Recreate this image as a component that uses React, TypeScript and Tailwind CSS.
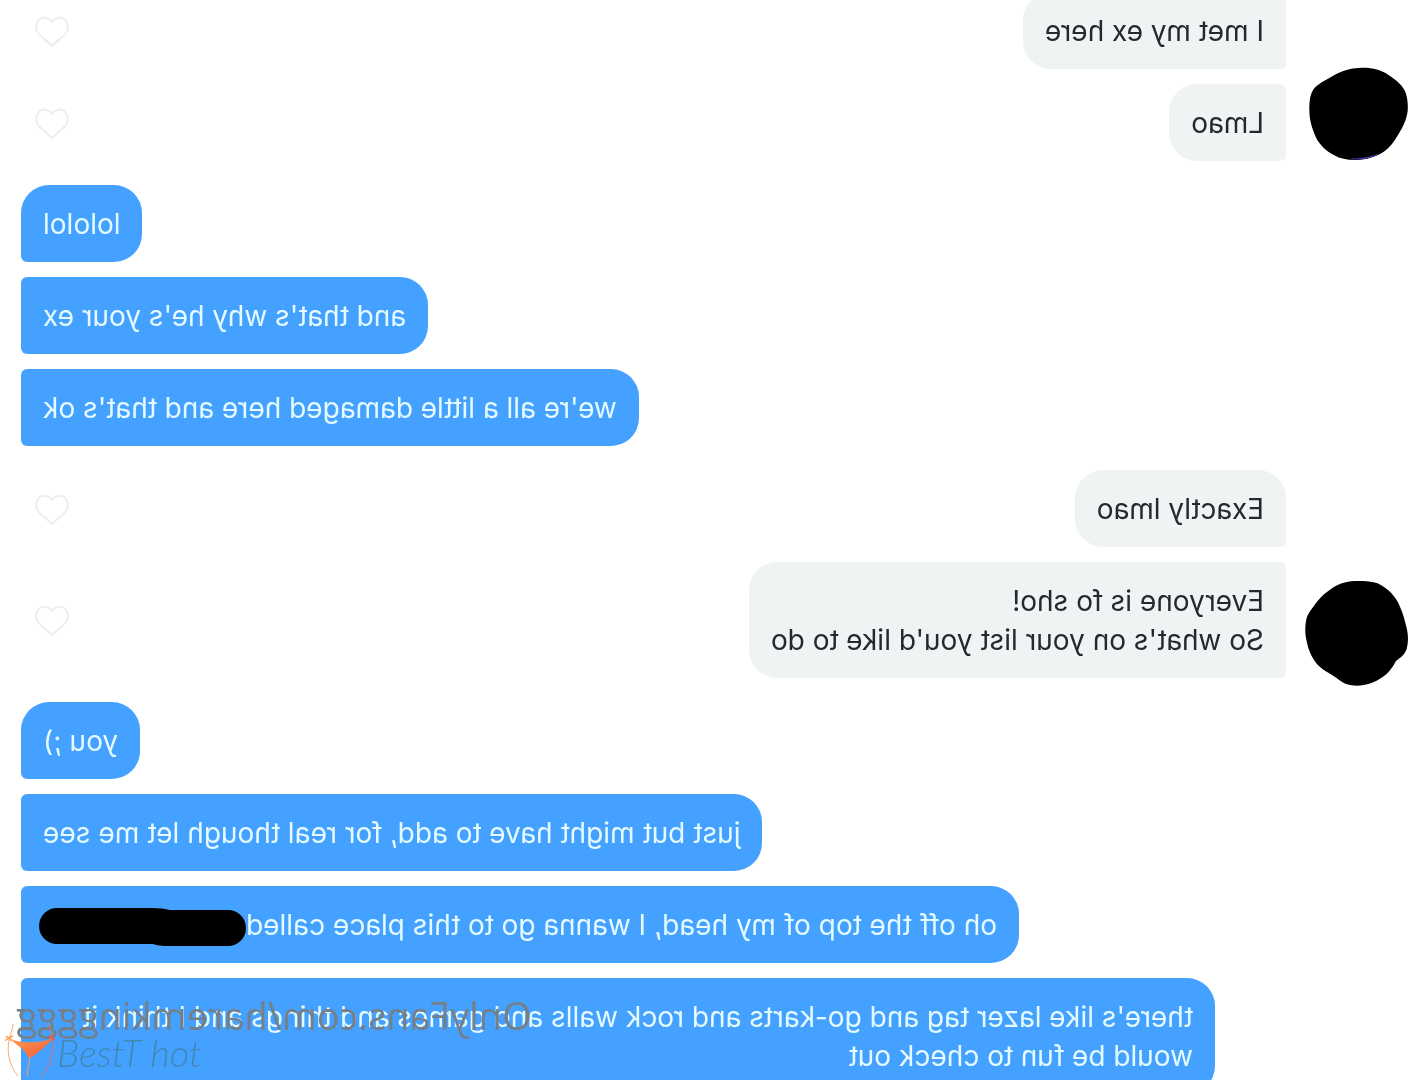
import type { ReactNode } from 'react';
import clsx from 'clsx';

type Message = { id: string; text: ReactNode; corners: string };
type Group = { from: 'them' | 'me'; avatar?: ReactNode; messages: Message[] };

function Redacted() {
  return (
    <svg viewBox="0 0 207 38" className="-mr-1 -my-2 inline-block h-[38px] w-[207px] -scale-x-100 align-middle" role="img" aria-label="redacted">
      <path d="M18 0 H112 Q124 0 131 2 H189 A18 18 0 0 1 189 38 H130 Q120 38 114 36 H18 A18 18 0 0 1 18 0 Z" />
    </svg>
  );
}

function AvatarOne() {
  return (
    <svg viewBox="87 52 298 281" className="h-[94px] w-[99px] -scale-x-100" role="img" aria-label="Profile photo, hidden">
      <path
        d="M250 53 C280 53 305 60 325 74 C350 90 372 108 379 132 C385 152 386 178 382 195 C378 215 368 235 357 252 C343 275 332 294 306 310 C285 322 260 330 232 331 C205 332 182 328 163 317 C140 305 118 285 108 263 C95 235 88 210 88 180 C87 155 90 133 101 117 C112 103 130 95 148 84 C175 66 205 53 250 53 Z"
      />
      <path d="M215 326 C245 327 270 322 300 311 C280 325 250 332 215 329 Z" fill="#4a32a8" />
    </svg>
  );
}

function AvatarTwo() {
  return (
    <svg viewBox="73 65 308 314" className="-mb-2 h-[105px] w-[103px] -scale-x-100" role="img" aria-label="Profile photo, hidden">
      <path
        d="M230 65 C255 65 275 66 290 72 C320 86 345 112 356 140 C368 165 372 190 378 210 C382 230 382 250 377 268 C370 288 355 295 345 304 C335 322 325 338 305 352 C285 367 255 378 228 378 C205 378 190 372 175 361 C155 345 130 335 113 318 C95 300 84 275 79 250 C72 225 72 195 79 172 C84 158 98 143 108 128 C122 110 140 96 158 84 C178 70 205 65 230 65 Z"
      />
    </svg>
  );
}

const groups: Group[] = [
  {
    from: 'them',
    avatar: <AvatarOne />,
    messages: [
      { id: 'met', text: 'I met my ex here', corners: 'rounded-r-[28px] rounded-l-md' },
      { id: 'lmao', text: 'Lmao', corners: 'rounded-r-[28px] rounded-l-md' },
    ],
  },
  {
    from: 'me',
    messages: [
      { id: 'lol', text: 'lololol', corners: 'rounded-[28px] rounded-br-md' },
      { id: 'why', text: "and that's why he's your ex", corners: 'rounded-l-[28px] rounded-r-md' },
      { id: 'ok', text: "we're all a little damaged here and that's ok", corners: 'rounded-l-[28px] rounded-r-md' },
    ],
  },
  {
    from: 'them',
    avatar: <AvatarTwo />,
    messages: [
      { id: 'exactly', text: 'Exactly lmao', corners: 'rounded-[28px] rounded-bl-md' },
      {
        id: 'list',
        text: (
          <>
            Everyone is fo sho!
            <br />
            So what's on your list you'd like to do
          </>
        ),
        corners: 'rounded-r-[28px] rounded-l-md',
      },
    ],
  },
  {
    from: 'me',
    messages: [
      { id: 'you', text: 'you ;)', corners: 'rounded-[28px] rounded-br-md' },
      { id: 'just', text: 'just but might have to add, for real though let me see', corners: 'rounded-l-[28px] rounded-r-md' },
      {
        id: 'place',
        text: (
          <>
            oh off the top of my head, I wanna go to this place called
            <Redacted />
          </>
        ),
        corners: 'rounded-l-[28px] rounded-r-md',
      },
      {
        id: 'lazer',
        text: "there's like lazer tag and go-karts and rock walls and games and things and I think it would be fun to check out",
        corners: 'rounded-l-[28px] rounded-r-md',
      },
    ],
  },
];

function LikeButton() {
  return (
    <button type="button" aria-label="Like message" className="mt-0.5 shrink-0">
      <svg viewBox="0 0 34 32" className="h-8 w-[34px]" fill="none" stroke="#eeeeee" strokeWidth="2" strokeLinejoin="round">
        <path d="M17 6 C14 1 8 1 5 3 C1 6 0 12 3 17 C6 21 12 25 17 30 C22 25 28 21 31 17 C34 12 33 6 29 3 C26 1 20 1 17 6 Z" />
      </svg>
    </button>
  );
}

function Bubble({ from, message }: { from: Group['from']; message: Message }) {
  return (
    <p
      className={clsx(
        'px-[22px] pt-5 pb-[18px]',
        message.corners,
        from === 'me' ? 'bg-[#45a1ff] text-[#e4fbff]' : 'bg-[#eff3f3] text-[#25292b]',
      )}
    >
      {message.text}
    </p>
  );
}

function MessageGroup({ group }: { group: Group }) {
  if (group.from === 'me') {
    return (
      <section className="flex flex-col items-end gap-[15px] pr-[21px] pl-[207px]">
        {group.messages.map((m) => (
          <Bubble key={m.id} from="me" message={m} />
        ))}
      </section>
    );
  }
  return (
    <section className="flex items-end">
      <div className="w-[136px] shrink-0 pl-[14px]">{group.avatar}</div>
      <div className="flex flex-1 flex-col gap-[15px] pr-[35px]">
        {group.messages.map((m) => (
          <div key={m.id} className="flex items-center justify-between">
            <Bubble from="them" message={m} />
            <LikeButton />
          </div>
        ))}
      </div>
    </section>
  );
}

function BrandMark() {
  return (
    <div className="absolute bottom-0 left-1 flex items-end">
      <svg viewBox="0 0 160 170" className="h-[57px] w-[53px]" fill="none" strokeLinecap="round" strokeWidth="3" aria-hidden="true">
        <defs>
          <linearGradient id="mark" x1="0" y1="0" x2="1" y2="1">
            <stop offset="0" stopColor="#ff9d4d" />
            <stop offset="1" stopColor="#ef5a3c" />
          </linearGradient>
        </defs>
        <path d="M28 2 C25 16 22 28 18 40 C11 66 12 88 16 108 C22 128 30 145 41 158" stroke="#ffa864" />
        <path d="M133 2 C139 18 145 32 145 48 C148 80 145 102 137 122 C130 138 122 148 113 158" stroke="#f26b4c" />
        <path d="M16 44 L6 40 M16 44 L5 51 M16 44 L26 38 M16 44 L22 52" stroke="#ff9a4c" strokeWidth="4" />
        <path d="M143 44 L151 34 M143 44 L152 50 M143 44 L134 39 M143 44 L139 53" stroke="#f0583c" strokeWidth="4" />
        <path d="M18 45 C35 56 57 57 79 57 C105 57 128 53 144 44 C134 66 112 78 91 97 Q78 110 70 97 C60 75 39 68 18 45 Z" fill="url(#mark)" />
        <path d="M78 102 C77 120 71 136 70 158" stroke="#ffa057" />
        <circle cx="83" cy="38" r="2" fill="#f2703f" />
      </svg>
      <span className="mb-2 font-['Lato',sans-serif] text-[38px] leading-10 font-light text-[#4189b4] italic">BestT hot</span>
    </div>
  );
}

export default function App() {
  return (
    <div className="relative h-screen overflow-hidden bg-white font-['Inter',sans-serif]">
      <main className="-mt-2 flex -scale-x-100 flex-col gap-6 text-[28px] leading-[39px]">
        {groups.map((g) => (
          <MessageGroup key={g.messages[0].id} group={g} />
        ))}
      </main>
      <p className="absolute bottom-10 left-4 -scale-x-100 font-['Open_Sans',sans-serif] text-[38px] leading-[50px] text-[#747f89]">
        OnlyFans.com/haremkingggg
      </p>
      <BrandMark />
    </div>
  );
}
